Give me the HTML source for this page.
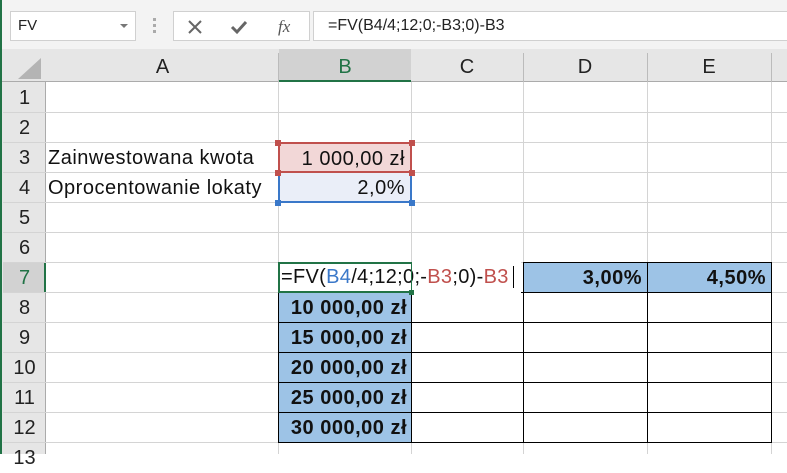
<!DOCTYPE html>
<html><head><meta charset="utf-8"><style>
*{margin:0;padding:0;box-sizing:border-box}
body{width:787px;height:454px;overflow:hidden;background:#fff;font-family:"Liberation Sans",sans-serif;position:relative}
.a{position:absolute}
.hl{position:absolute;height:1px;background:#d4d4d4}
.vl{position:absolute;width:1px;background:#d4d4d4}
.rn{position:absolute;left:3px;width:43px;height:30px;text-align:center;font-size:20px;line-height:30px;color:#222}
.ch{position:absolute;top:53px;height:29px;text-align:center;font-size:20px;line-height:29px;color:#222}
.c{position:absolute;height:30px;line-height:30px;font-size:20px;letter-spacing:0.5px;color:#111;white-space:nowrap}
.r{text-align:right;padding-right:5px}
.b{font-weight:bold}
</style></head><body>
<div class="a" style="left:0;top:0;width:787px;height:49px;background:#f3f3f3"></div>
<div class="a" style="left:0;top:0;width:2px;height:454px;background:#217346"></div>
<div class="a" style="left:10px;top:11px;width:126px;height:30px;background:#fff;border:1px solid #d0d0d0;font-size:15px;line-height:28px;padding-left:7px;color:#222">FV</div>
<div class="a" style="left:120px;top:24px;width:0;height:0;border-left:4px solid transparent;border-right:4px solid transparent;border-top:4px solid #777"></div>
<div class="a" style="left:153px;top:18px;width:3px;height:16px;background:repeating-linear-gradient(#aaa 0 3px,transparent 3px 6px)"></div>
<div class="a" style="left:173px;top:11px;width:137px;height:30px;background:#fff;border:1px solid #d0d0d0"></div>
<svg class="a" style="left:186px;top:17px" width="120" height="20"><path d="M3 4L15 16M15 4L3 16" stroke="#666" stroke-width="2"/><path d="M46 10L51 15L60 5" stroke="#666" stroke-width="3" fill="none"/><text x="92" y="15" font-family="Liberation Serif" font-style="italic" font-size="17" fill="#555">fx</text></svg>
<div class="a" style="left:313px;top:11px;width:474px;height:30px;background:#fff;border:1px solid #d0d0d0;border-right:none;font-size:16px;line-height:28px;padding-left:14px;color:#222">=FV(B4/4;12;0;-B3;0)-B3</div>
<div class="a" style="left:2px;top:49px;width:785px;height:33px;background:#e6e6e6;border-bottom:1px solid #ababab"></div>
<div class="a" style="left:2px;top:82px;width:44px;height:372px;background:#e6e6e6;border-right:1px solid #ababab"></div>
<svg class="a" style="left:14px;top:58px" width="28" height="22"><path d="M27 0V21H4Z" fill="#b4b4b4"/></svg>
<div class="a" style="left:279px;top:49px;width:132px;height:33px;background:#d2d2d2;border-bottom:2px solid #217346"></div>
<div class="a" style="left:3px;top:262px;width:43px;height:30px;background:#d2d2d2;border-right:2px solid #217346"></div>
<div class="ch" style="left:46px;width:233px">A</div>
<div class="ch" style="left:279px;width:132px;color:#217346">B</div>
<div class="ch" style="left:411px;width:112px">C</div>
<div class="ch" style="left:523px;width:124px">D</div>
<div class="ch" style="left:647px;width:124px">E</div>
<div class="vl" style="left:278px;top:53px;height:29px;background:#bbb"></div>
<div class="vl" style="left:523px;top:53px;height:29px;background:#bbb"></div>
<div class="vl" style="left:647px;top:53px;height:29px;background:#bbb"></div>
<div class="vl" style="left:771px;top:53px;height:29px;background:#bbb"></div>
<div class="hl" style="left:3px;top:112px;width:784px"></div>
<div class="hl" style="left:3px;top:142px;width:784px"></div>
<div class="hl" style="left:3px;top:172px;width:784px"></div>
<div class="hl" style="left:3px;top:202px;width:784px"></div>
<div class="hl" style="left:3px;top:232px;width:784px"></div>
<div class="hl" style="left:3px;top:262px;width:784px"></div>
<div class="hl" style="left:3px;top:292px;width:784px"></div>
<div class="hl" style="left:3px;top:322px;width:784px"></div>
<div class="hl" style="left:3px;top:352px;width:784px"></div>
<div class="hl" style="left:3px;top:382px;width:784px"></div>
<div class="hl" style="left:3px;top:412px;width:784px"></div>
<div class="hl" style="left:3px;top:442px;width:784px"></div>
<div class="vl" style="left:278px;top:82px;height:372px"></div>
<div class="vl" style="left:411px;top:82px;height:372px"></div>
<div class="vl" style="left:523px;top:82px;height:372px"></div>
<div class="vl" style="left:647px;top:82px;height:372px"></div>
<div class="vl" style="left:771px;top:82px;height:372px"></div>
<div class="rn" style="top:83px">1</div><div class="rn" style="top:113px">2</div><div class="rn" style="top:143px">3</div><div class="rn" style="top:173px">4</div><div class="rn" style="top:203px">5</div><div class="rn" style="top:233px">6</div><div class="rn" style="top:263px;color:#217346">7</div><div class="rn" style="top:293px">8</div><div class="rn" style="top:323px">9</div><div class="rn" style="top:353px">10</div><div class="rn" style="top:383px">11</div><div class="rn" style="top:413px">12</div><div class="rn" style="top:443px">13</div>
<div class="c" style="left:48px;top:143px">Zainwestowana kwota</div>
<div class="c" style="left:48px;top:173px">Oprocentowanie lokaty</div>
<div class="c r" style="left:278px;top:142px;width:134px;height:31px;background:#f2d7d7;border:2px solid #c0504d">1 000,00 zł</div>
<div class="c r" style="left:278px;top:173px;width:134px;height:30px;background:#eaeef8;border:2px solid #3a78c9;border-top:none">2,0%</div>
<div class="a" style="left:275px;top:140px;width:6px;height:6px;background:#c0504d"></div><div class="a" style="left:409px;top:140px;width:6px;height:6px;background:#c0504d"></div>
<div class="a" style="left:275px;top:170px;width:6px;height:6px;background:#c0504d"></div><div class="a" style="left:409px;top:170px;width:6px;height:6px;background:#c0504d"></div>
<div class="a" style="left:275px;top:200px;width:6px;height:6px;background:#3a78c9"></div><div class="a" style="left:409px;top:200px;width:6px;height:6px;background:#3a78c9"></div>
<div class="c r b" style="left:523px;top:262px;width:125px;height:31px;background:#9dc3e6;border:1px solid #000">3,00%</div>
<div class="c r b" style="left:647px;top:262px;width:125px;height:31px;background:#9dc3e6;border:1px solid #000">4,50%</div>
<div class="c r b" style="left:278px;top:292px;width:134px;height:151px;background:#9dc3e6;border:1px solid #000"></div>
<div class="c r b" style="left:278px;top:293px;width:134px">10 000,00 zł</div>
<div class="c r b" style="left:278px;top:323px;width:134px">15 000,00 zł</div>
<div class="c r b" style="left:278px;top:353px;width:134px">20 000,00 zł</div>
<div class="c r b" style="left:278px;top:383px;width:134px">25 000,00 zł</div>
<div class="c r b" style="left:278px;top:413px;width:134px">30 000,00 zł</div>
<div class="hl" style="left:278px;top:322px;width:494px;background:#000"></div>
<div class="hl" style="left:278px;top:352px;width:494px;background:#000"></div>
<div class="hl" style="left:278px;top:382px;width:494px;background:#000"></div>
<div class="hl" style="left:278px;top:412px;width:494px;background:#000"></div>
<div class="hl" style="left:278px;top:442px;width:494px;background:#000"></div>
<div class="hl" style="left:411px;top:292px;width:361px;background:#000"></div>
<div class="vl" style="left:411px;top:292px;height:151px;background:#000"></div>
<div class="vl" style="left:523px;top:292px;height:151px;background:#000"></div>
<div class="vl" style="left:647px;top:292px;height:151px;background:#000"></div>
<div class="vl" style="left:771px;top:262px;height:181px;background:#000"></div>
<div class="c" style="left:278px;top:262px;width:243px;height:31px;background:#fff;padding-left:3px;letter-spacing:0.3px"><span>=FV(</span><span style="color:#3a78c9">B4</span><span>/4;12;0;-</span><span style="color:#c0504d">B3</span><span>;0)-</span><span style="color:#c0504d">B3</span></div>
<div class="a" style="left:278px;top:262px;width:134px;height:31px;border:2px solid #217346;border-right:none"></div>
<div class="a" style="left:411px;top:262px;width:1px;height:31px;background:#217346"></div>
<div class="a" style="left:513px;top:266px;width:1px;height:22px;background:#000"></div>
<div class="a" style="left:409px;top:290px;width:5px;height:5px;background:#217346"></div>
</body></html>
